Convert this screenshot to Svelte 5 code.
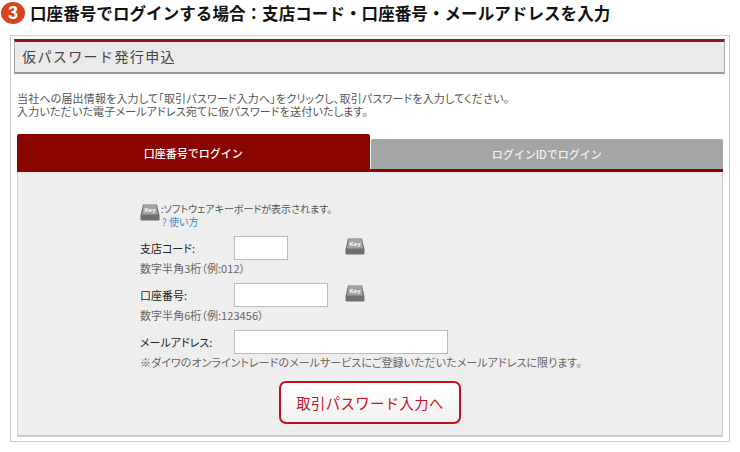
<script lang="ts">
  const fields = [
    { label: "支店コード:", width: 54, key: true, hint: "数字半角3桁（例:012）" },
    { label: "口座番号:", width: 94, key: true, hint: "数字半角6桁（例:123456）" },
    {
      label: "メールアドレス:",
      width: 214,
      key: false,
      hint: "※ダイワのオンライントレードのメールサービスにご登録いただいたメールアドレスに限ります。",
    },
  ];
</script>

{#snippet keyIcon()}
  <svg class="key" width="20" height="17" viewBox="0 0 20 17">
    <path d="M3 .5h14l2.500 11v4a1 1 0 0 1-1 1H1.500a1 1 0 0 1-1-1v-4z" fill="#6f6f6f" />
    <path d="M3.600 1h12.800l1.500 9.500H2.100z" fill="#a3a3a3" />
    <text x="10" y="8" text-anchor="middle" class="key-text">Key</text>
  </svg>
{/snippet}

<div class="page">
  <h1 class="title">
    <span class="num">3</span>
    <span>口座番号でログインする場合：支店コード・口座番号・メールアドレスを入力</span>
  </h1>

  <div class="frame">
    <h2 class="head">仮パスワード発行申込</h2>
    <p class="intro">
      当社への届出情報を入力して「取引パスワード入力へ」をクリックし、取引パスワードを入力してください。<br />
      入力いただいた電子メールアドレス宛てに仮パスワードを送付いたします。
    </p>

    <div class="tabs">
      <div class="tab active">口座番号でログイン</div>
      <div class="tab">ログインIDでログイン</div>
    </div>

    <div class="panel">
      <div class="legend">
        {@render keyIcon()}
        <div>
          <div>:ソフトウェアキーボードが表示されます。</div>
          <div class="help">? 使い方</div>
        </div>
      </div>

      {#each fields as f}
        <div class="row">
          <span class="label">{f.label}</span>
          <span class="cell"><input type="text" style="width:{f.width}px" /></span>
          {#if f.key}{@render keyIcon()}{/if}
        </div>
        <div class="hint">{f.hint}</div>
      {/each}

      <div class="actions">
        <button type="button" class="submit">取引パスワード入力へ</button>
      </div>
    </div>
  </div>
</div>

<style>
  :global(body) {
    margin: 0;
    background: #fff;
    font-family: "Noto Sans CJK JP", "Liberation Sans", sans-serif;
  }
  .page {
    width: 740px;
    height: 452px;
    overflow: hidden;
  }
  .title {
    display: flex;
    align-items: center;
    gap: 5px;
    height: 26px;
    margin: 0 0 9px;
    padding-left: 1px;
    font-size: 16.5px;
    font-weight: 700;
    color: #111;
    white-space: nowrap;
    letter-spacing: 0.08px;
  }
  .num {
    display: flex;
    align-items: center;
    justify-content: center;
    width: 24px;
    height: 22px;
    border-radius: 50%;
    background: #d9431e;
    color: #fff;
    font-size: 18px;
    font-family: "Liberation Sans", sans-serif;
  }
  .frame {
    box-sizing: border-box;
    width: 720px;
    height: 407px;
    margin-left: 10px;
    padding: 3px 4px 0 3px;
    border: 1px solid #ccc;
  }
  .head {
    box-sizing: border-box;
    height: 35px;
    margin: 0;
    padding-left: 7px;
    border: 1px solid #aaa;
    border-top: 3px solid #8b1a1a;
    border-bottom: 2px solid #999;
    background: #eaeaea;
    font-size: 14px;
    line-height: 29px;
    font-weight: 400;
    color: #444;
    letter-spacing: 0.1em;
  }
  .intro {
    margin: 18px 0 0 3px;
    height: 27px;
    font-size: 11px;
    line-height: 13px;
    color: #555;
    white-space: nowrap;
    font-feature-settings: "palt";
    letter-spacing: 0.17px;
  }
  .tabs {
    display: flex;
    align-items: flex-end;
    gap: 1px;
    margin: 15px 2px 0 3px;
    height: 35px;
    border-bottom: 3px solid #8b0500;
  }
  .tab {
    flex: 1;
    height: 30px;
    border-radius: 2px 2px 0 0;
    background: #a5a5a5;
    color: #f2f2f2;
    font-size: 11px;
    font-weight: 500;
    line-height: 30px;
    text-align: center;
  }
  .tab.active {
    height: 35px;
    background: #8b0500;
    color: #fff;
    line-height: 38px;
  }
  .panel {
    box-sizing: border-box;
    height: 265px;
    margin: 0 2px 0 3px;
    padding: 30px 0 0 122px;
    border: 1px solid #ccc;
    border-top: 0;
    border-bottom-width: 2px;
    background: #eee;
  }
  .legend {
    display: flex;
    gap: 1px;
    height: 34px;
    font-size: 10px;
    line-height: 13px;
    color: #555;
    font-feature-settings: "palt";
  }
  .legend .key {
    margin-top: 2px;
  }
  .help {
    padding-left: 1px;
    color: #3b8fc9;
  }
  .row {
    display: flex;
    height: 24px;
  }
  .row .key {
    margin-top: 2px;
  }
  .label {
    width: 94px;
    font-size: 11px;
    line-height: 24px;
    color: #222;
    font-feature-settings: "palt";
  }
  .cell {
    display: block;
    width: 111px;
    height: 24px;
  }
  input {
    box-sizing: border-box;
    display: block;
    height: 24px;
    border: 1px solid #bbb;
    background: #fff;
    padding: 0;
  }
  .hint {
    height: 23px;
    font-size: 11px;
    line-height: 16px;
    color: #666;
    white-space: nowrap;
    font-feature-settings: "palt";
    letter-spacing: 0.05px;
  }
  .actions {
    display: flex;
    padding-left: 139px;
    margin-top: 4px;
  }
  .submit {
    width: 182px;
    height: 43px;
    border: 2px solid #c1121c;
    border-radius: 7px;
    background: linear-gradient(#fff, #f1f1f1);
    color: #c1121c;
    font-family: inherit;
    font-size: 14.3px;
    font-weight: 400;
    letter-spacing: 0.03em;
  }
  .key-text {
    font-family: "Liberation Sans", sans-serif;
    font-size: 6px;
    font-weight: 700;
    fill: #fff;
  }
</style>
